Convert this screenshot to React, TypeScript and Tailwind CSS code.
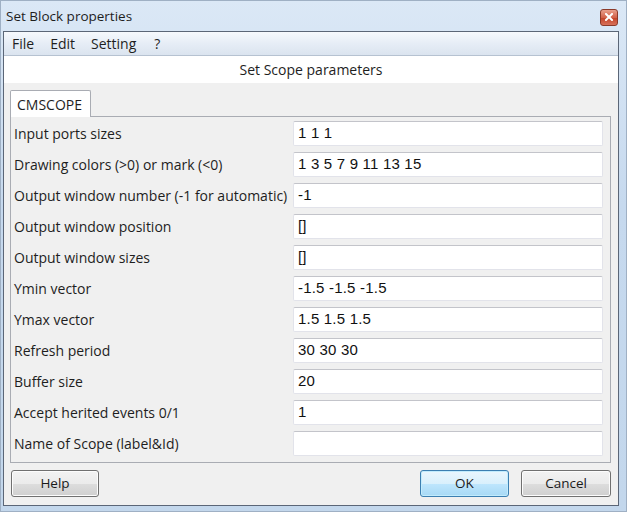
import React from "react";

const rows: [string, string][] = [
  ["Input ports sizes", "1 1 1"],
  ["Drawing colors (>0) or mark (<0)", "1 3 5 7 9 11 13 15"],
  ["Output window number (-1 for automatic)", "-1"],
  ["Output window position", "[]"],
  ["Output window sizes", "[]"],
  ["Ymin vector", "-1.5 -1.5 -1.5"],
  ["Ymax vector", "1.5 1.5 1.5"],
  ["Refresh period", "30 30 30"],
  ["Buffer size", "20"],
  ["Accept herited events 0/1", "1"],
  ["Name of Scope (label&Id)", ""],
];

const ui = { fontFamily: '"Open Sans", "Noto Sans", sans-serif' };
const mono = { fontFamily: '"Liberation Sans", Arial, sans-serif' };

const WinButton = ({ label, focused, w }: { label: string; focused?: boolean; w: string }) => (
  <div
    className={`${w} h-[27px] rounded-[3px] border flex items-center justify-center text-[13.5px] text-[#1a1a1a] ${
      focused
        ? "border-[#3c7fb1] bg-[linear-gradient(#eaf6fd_0%,#d9f0fc_50%,#bee6fd_51%,#a7d9f5_100%)] shadow-[inset_0_0_0_1px_#c2ecfd]"
        : "border-[#707070] bg-[linear-gradient(#f2f2f2_0%,#ebebeb_50%,#dddddd_51%,#cfcfcf_100%)] shadow-[inset_0_0_0_1px_#fcfcfc]"
    }`}
    style={ui}
  >
    {label}
  </div>
);

export default function App() {
  return (
    <div
      className="w-[627px] h-[512px] flex flex-col bg-[linear-gradient(#dbe8f6,#c6d9ee_40%,#c3d7ec)] border border-[#9fb0c4] overflow-hidden"
      style={ui}
    >
      {/* title bar */}
      <div className="h-[30px] flex items-center justify-between pl-[5px] pr-[8px] shrink-0">
        <span className="text-[13.5px] text-[#1e1e1e]">Set Block properties</span>
        <div className="w-[18px] h-[17px] mt-[2px] rounded-[3px] border border-[#8b3a2a] bg-[linear-gradient(#e9a08c,#d2624a_50%,#c24126_51%,#d8715a)] flex items-center justify-center">
          <svg width="8" height="8" viewBox="0 0 8 8">
            <path d="M1 1L7 7M7 1L1 7" stroke="#ffffff" strokeWidth="2" strokeLinecap="square" />
          </svg>
        </div>
      </div>

      {/* client */}
      <div className="flex-1 ml-[2px] mr-[7px] mb-[5px] border border-[#5b6677] bg-[#f0f0f0] flex flex-col">
        {/* menu */}
        <div className="h-[24px] flex items-center gap-[16px] pl-[8px] text-[14px] text-[#1e1e1e] bg-[linear-gradient(#f6f9fd,#e6edf6_50%,#dbe4ef)] border-b border-[#b6c2d1] shrink-0">
          <span>File</span>
          <span>Edit</span>
          <span>Setting</span>
          <span className="ml-[2px]">?</span>
        </div>

        {/* header */}
        <div className="h-[27px] bg-white flex items-center justify-center text-[14px] text-[#1e1e1e] shrink-0">
          Set Scope parameters
        </div>

        {/* tabs */}
        <div className="flex-1 flex flex-col px-[6px] pt-[6px]">
          <div className="flex shrink-0">
            <div className="h-[27px] w-[81px] bg-white border border-b-0 border-[#a9acb3] rounded-t-[2px] flex items-center pl-[6px] text-[14px] text-[#1e1e1e] relative top-[1px]">
              CMSCOPE
            </div>
          </div>
          <div className="border border-[#a9acb3] mr-[1px] pl-[3px] pr-[7px] pt-[4px] pb-[6px] flex flex-col gap-[6px] bg-[#f0f0f0]">
            {rows.map(([label, value]) => (
              <div key={label} className="flex items-center h-[25px]">
                <div className="w-[279px] text-[14px] text-[#1e1e1e] whitespace-nowrap">{label}</div>
                <div
                  className="flex-1 h-[25px] bg-white border border-[#e2e3ea] border-t-[#c3c4ca] rounded-[2px] flex items-center pl-[4px] text-[15px] tracking-[0.2px] text-[#111]"
                  style={mono}
                >
                  {value}
                </div>
              </div>
            ))}
          </div>
        </div>

        {/* buttons */}
        <div className="h-[42px] flex items-start pt-[7px] px-[7px] justify-between shrink-0">
          <WinButton label="Help" w="w-[88px]" />
          <div className="flex gap-[12px]">
            <WinButton label="OK" w="w-[89px]" focused />
            <WinButton label="Cancel" w="w-[90px]" />
          </div>
        </div>
      </div>
    </div>
  );
}
